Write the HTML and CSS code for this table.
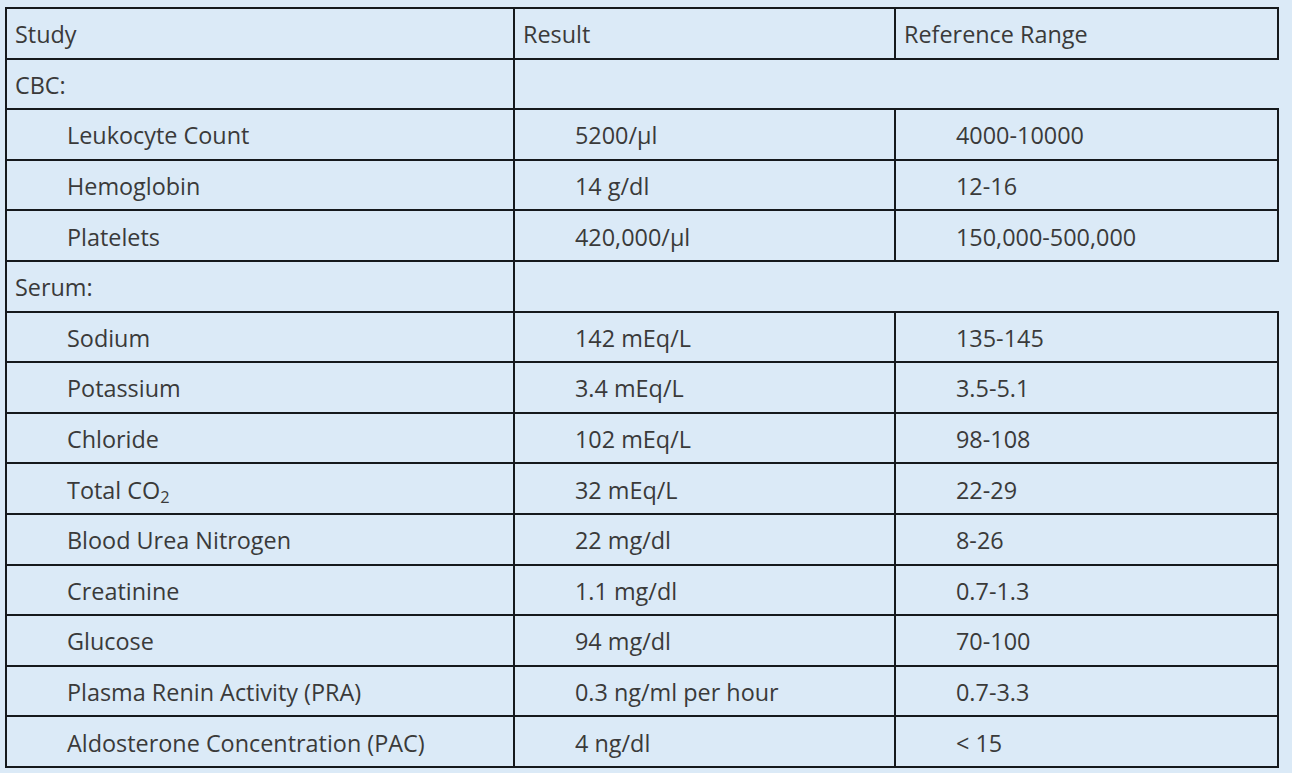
FILE: index.html
```html
<!DOCTYPE html>
<html lang="en">
<head>
<meta charset="utf-8">
<title>Lab results</title>
<link rel="stylesheet" href="styles.css">
</head>
<body>
<table class="labs">
  <colgroup>
    <col class="c-study">
    <col class="c-result">
    <col class="c-range">
  </colgroup>
  <tr class="head"><td>Study</td><td>Result</td><td>Reference Range</td></tr>
  <tr class="section"><td>CBC:</td><td class="blank" colspan="2"></td></tr>
  <tr><td class="ind">Leukocyte Count</td><td class="ind">5200/µl</td><td class="ind">4000-10000</td></tr>
  <tr><td class="ind">Hemoglobin</td><td class="ind">14 g/dl</td><td class="ind">12-16</td></tr>
  <tr><td class="ind">Platelets</td><td class="ind">420,000/µl</td><td class="ind">150,000-500,000</td></tr>
  <tr class="section"><td>Serum:</td><td class="blank" colspan="2"></td></tr>
  <tr><td class="ind">Sodium</td><td class="ind">142 mEq/L</td><td class="ind">135-145</td></tr>
  <tr><td class="ind">Potassium</td><td class="ind">3.4 mEq/L</td><td class="ind">3.5-5.1</td></tr>
  <tr><td class="ind">Chloride</td><td class="ind">102 mEq/L</td><td class="ind">98-108</td></tr>
  <tr><td class="ind">Total CO<sub>2</sub></td><td class="ind">32 mEq/L</td><td class="ind">22-29</td></tr>
  <tr><td class="ind">Blood Urea Nitrogen</td><td class="ind">22 mg/dl</td><td class="ind">8-26</td></tr>
  <tr><td class="ind">Creatinine</td><td class="ind">1.1 mg/dl</td><td class="ind">0.7-1.3</td></tr>
  <tr><td class="ind">Glucose</td><td class="ind">94 mg/dl</td><td class="ind">70-100</td></tr>
  <tr><td class="ind">Plasma Renin Activity (PRA)</td><td class="ind">0.3 ng/ml per hour</td><td class="ind">0.7-3.3</td></tr>
  <tr><td class="ind">Aldosterone Concentration (PAC)</td><td class="ind">4 ng/dl</td><td class="ind">&lt; 15</td></tr>
</table>
</body>
</html>
```

FILE: styles.css
```css
html, body {
  margin: 0;
  background: #dbeaf7;
}
body {
  padding: 7px 0 0 5px;
  font-family: "Open Sans", "Noto Sans", "Liberation Sans", sans-serif;
  font-size: 23.4px;
  color: #3a3a3a;
}
.labs {
  border-collapse: collapse;
  width: 1272px;
  table-layout: fixed;
}
.c-study { width: 508px; }
.c-result { width: 381px; }
.c-range { width: 383px; }
.labs tr { height: 50.6px; }
.labs td {
  border: 2px solid #15191d;
  padding: 2px 8px 0;
  vertical-align: middle;
  white-space: nowrap;
  line-height: 1.2;
}
.labs td.ind { padding-left: 60px; }
.labs td.blank { border: none; }
.labs sub {
  font-size: 0.7em;
  vertical-align: -0.25em;
  line-height: 0;
}
```
